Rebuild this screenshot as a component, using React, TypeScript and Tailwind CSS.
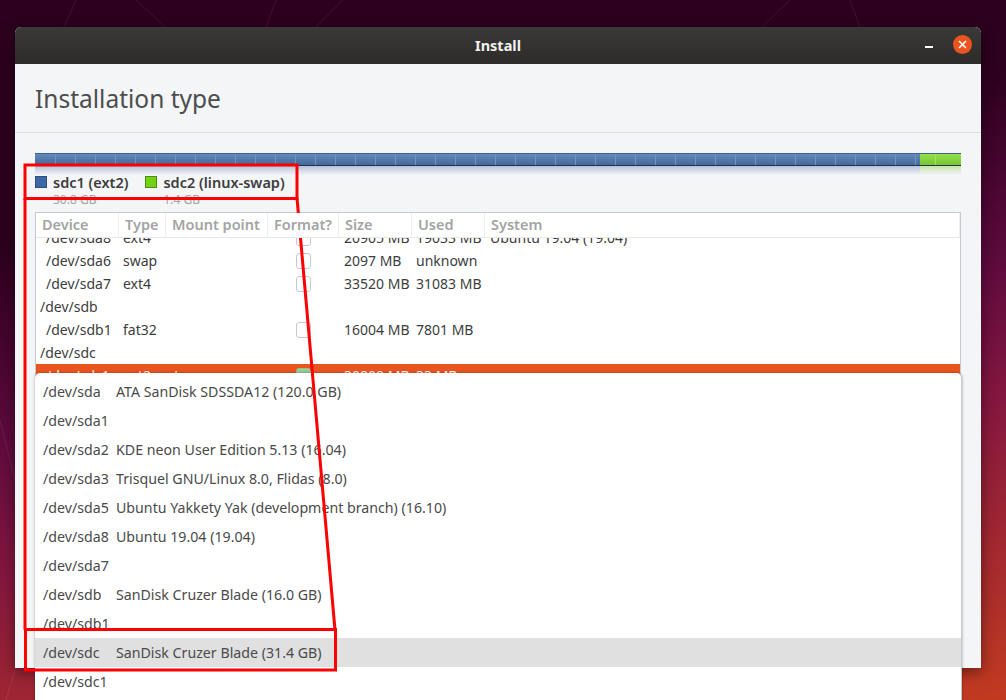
const font = 'font-["Noto_Sans",sans-serif]';

const columns = [
  { label: 'Device', width: 'w-[83px]' },
  { label: 'Type', width: 'w-[47px]' },
  { label: 'Mount point', width: 'w-[102px]' },
  { label: 'Format?', width: 'w-[71px]' },
  { label: 'Size', width: 'w-[73px]' },
  { label: 'Used', width: 'w-[73px]' },
  { label: 'System', width: 'flex-1' },
];

const rows = [
  { device: '/dev/sda8', child: true, type: 'ext4', check: true, size: '20905 MB', used: '19033 MB', system: 'Ubuntu 19.04 (19.04)' },
  { device: '/dev/sda6', child: true, type: 'swap', check: true, size: '2097 MB', used: 'unknown' },
  { device: '/dev/sda7', child: true, type: 'ext4', check: true, size: '33520 MB', used: '31083 MB' },
  { device: '/dev/sdb' },
  { device: '/dev/sdb1', child: true, type: 'fat32', check: true, size: '16004 MB', used: '7801 MB' },
  { device: '/dev/sdc' },
  { device: '/dev/sdc1', child: true, type: 'ext2', mount: '/', check: true, selected: true, size: '30809 MB', used: '33 MB' },
];

const bootDevices = [
  { path: '/dev/sda', name: 'ATA SanDisk SDSSDA12 (120.0 GB)' },
  { path: '/dev/sda1' },
  { path: '/dev/sda2', name: 'KDE neon User Edition 5.13 (16.04)' },
  { path: '/dev/sda3', name: 'Trisquel GNU/Linux 8.0, Flidas (8.0)' },
  { path: '/dev/sda5', name: 'Ubuntu Yakkety Yak (development branch) (16.10)' },
  { path: '/dev/sda8', name: 'Ubuntu 19.04 (19.04)' },
  { path: '/dev/sda7' },
  { path: '/dev/sdb', name: 'SanDisk Cruzer Blade (16.0 GB)' },
  { path: '/dev/sdb1' },
  { path: '/dev/sdc', name: 'SanDisk Cruzer Blade (31.4 GB)', active: true },
  { path: '/dev/sdc1' },
];

function PartitionBar() {
  return (
    <div className="relative h-[13px] w-full">
      <div className="flex h-full border-y border-t-[#3f5f8c] border-b-[#22324f]">
        <div className="flex h-full w-[885px] bg-gradient-to-b from-[#6289bb] to-[#45699b] pl-px">
          {Array.from({ length: 44 }).map((_, i) => (
            <div key={i} className="h-full w-[20px] shrink-0 border-r border-[#7393bd]" />
          ))}
        </div>
        <div className="flex h-full flex-1 bg-gradient-to-b from-[#93df4e] to-[#77c52f]">
          <div className="h-full w-[16px] border-r border-[#a8e070]" />
        </div>
      </div>
      <div className="flex h-[9px]">
        <div className="w-[885px] bg-gradient-to-b from-[#b4c3d8] to-[#f4f5f7]" />
        <div className="flex-1 bg-gradient-to-b from-[#c6e2a8] to-[#f4f5f7]" />
      </div>
    </div>
  );
}

function Legend({ color, border, name, size }: { color: string; border: string; name: string; size: string }) {
  return (
    <div className="flex items-start gap-[6px]">
      <div className={`mt-[3px] h-[12px] w-[12px] border ${color} ${border}`} />
      <div>
        <div className="text-[14.5px] font-semibold leading-[18px] text-[#3d3d3d]">{name}</div>
        <div className="text-[12px] leading-[18px] text-[#a3a3a3]">{size}</div>
      </div>
    </div>
  );
}

function PartitionTable() {
  return (
    <div className="mx-[20px] mt-[5px] flex h-[300px] flex-col overflow-hidden border border-[#c3c9d2] bg-white">
      <div className="relative z-10 flex h-[25px] shrink-0 border-b border-[#e8e8e8] bg-white">
        {columns.map((c) => (
          <div key={c.label} className={`${c.width} border-r border-[#eeeeee] pl-[6px] text-[14.5px] font-semibold leading-[22px] text-[#a4a4a4]`}>
            {c.label}
          </div>
        ))}
      </div>
      <div className="-mt-[12px]">
        {rows.map((r) => (
          <div
            key={r.device}
            className={`flex h-[23px] items-center text-[14px] leading-[23px] text-[#3d3d3d] ${r.selected ? 'bg-[#e95420] text-white' : ''}`}
          >
            <div className={`w-[87px] shrink-0 ${r.child ? 'pl-[10px]' : 'pl-[4px]'}`}>{r.device}</div>
            <div className="w-[49px] shrink-0">{r.type}</div>
            <div className="w-[124px] shrink-0">{r.mount}</div>
            <div className="w-[48px] shrink-0">
              {r.check && (
                <div className={`h-[16px] w-[15px] rounded-[3px] border ${r.selected ? 'border-[#8fc58a] bg-[#9ccb95]' : 'border-[#c3c9d2] bg-white'}`} />
              )}
            </div>
            <div className="w-[72px] shrink-0">{r.size}</div>
            <div className="w-[74px] shrink-0">{r.used}</div>
            <div>{r.system}</div>
          </div>
        ))}
      </div>
    </div>
  );
}

export default function App() {
  return (
    <div className={`${font} relative h-[700px] w-[1006px] overflow-hidden bg-[linear-gradient(170deg,#2c001e_0%,#2c001e_28%,#5e0a3e_50%,#85173f_66%,#c23b20_100%)]`}>
      <svg className="absolute left-0 top-0" width="1006" height="700" fill="none" stroke="#4a0f35" strokeWidth="1">
        <path d="M64 27 L76 0 M136 0 L165 27 M266 27 L276 0 M316 27 L343 0 M762 27 L790 0 M850 0 L860 27" />
        <path d="M0 420 L15 480 M6 700 L15 670" stroke="#ffffff" strokeOpacity="0.08" />
      </svg>

      {/* Installer window */}
      <div className="absolute left-[15px] top-[27px] flex h-[641px] w-[966px] flex-col overflow-hidden rounded-t-[6px] bg-[#f4f5f7] shadow-[0_4px_14px_rgba(0,0,0,0.45)]">
        <div className="relative flex h-[37px] shrink-0 items-center justify-center bg-gradient-to-b from-[#3a3937] to-[#2d2c2a]">
          <span className="text-[14.5px] font-bold text-[#f2f2f2]">Install</span>
          <div className="absolute left-[938px] top-[8px] flex h-[19px] w-[19px] items-center justify-center rounded-full bg-[#e95420]">
            <svg width="9" height="9" viewBox="0 0 9 9" stroke="white" strokeWidth="1.6">
              <path d="M1 1 L8 8 M8 1 L1 8" />
            </svg>
          </div>
          <div className="absolute left-[910px] top-[19px] h-[2px] w-[8px] bg-white" />
        </div>
        <div className="flex h-[69px] shrink-0 items-center border-b border-[#dcdde0] pl-[20px] pt-[2px]">
          <span className="text-[24.5px] text-[#4d4d4d]">Installation type</span>
        </div>
        <div className="px-[20px] pt-[20px]">
          <PartitionBar />
        </div>
        <div className="mt-[7px] flex h-[35px] gap-[17px] overflow-hidden px-[20px]">
          <Legend color="bg-[#3c69a5]" border="border-[#2f4f7c]" name="sdc1 (ext2)" size="30.8 GB" />
          <Legend color="bg-[#73d216]" border="border-[#4e8c10]" name="sdc2 (linux-swap)" size="1.4 GB" />
        </div>
        <div className="-mt-[1px]">
          <PartitionTable />
        </div>
      </div>

      {/* Boot loader device popover */}
      <div className="absolute left-[35px] top-[373px] h-[340px] w-[927px] rounded-[5px] border-r border-[#c3c9d2] bg-white py-[4px] text-[14.2px] text-[#4a4a4a] shadow-[0_0_3px_rgba(0,0,0,0.35)]">
        {bootDevices.map((d) => (
          <div key={d.path} className={`flex h-[29px] items-center pl-[8px] ${d.active ? 'bg-[#e0e0e0]' : ''}`}>
            <span className="w-[73px] shrink-0">{d.path}</span>
            <span>{d.name}</span>
          </div>
        ))}
      </div>

      {/* Red annotation drawn over the screenshot */}
      <svg className="absolute left-0 top-0" width="1006" height="700" fill="none" stroke="#ff0000" strokeWidth="3">
        <rect x="25" y="165" width="272" height="33.5" />
        <path d="M25 198 V630 M297 198 L335 630" />
        <rect x="25.5" y="629.5" width="310" height="40.5" />
      </svg>
    </div>
  );
}
